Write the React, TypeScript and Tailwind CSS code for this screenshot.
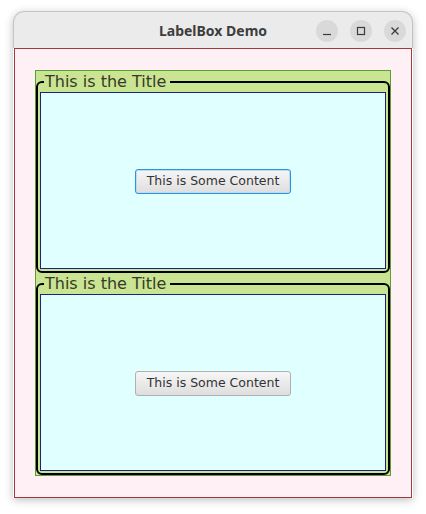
import React from "react";

function LabelBox({ focused }: { focused?: boolean }) {
  return (
    <fieldset className="m-0 h-[202px] rounded-[6px] border-2 border-black px-[2px] pb-[2px] pt-0">
      <legend
        className="ml-[4px] pl-[1px] pr-[4px] text-[16px] leading-[21px] text-[#38382c]"
        style={{ fontFamily: '"DejaVu Sans", sans-serif' }}
      >
        This is the Title
      </legend>
      <div className="flex h-[177px] items-center justify-center border border-[#1f1f86] bg-[#e0ffff]">
        <button
          className={
            "mt-[2px] h-[25px] w-[156px] rounded-[3px] border text-[12.5px] leading-none text-[#333333] " +
            (focused
              ? "border-[#2f92dc] bg-gradient-to-b from-[#f6f6f6] to-[#dedede] shadow-[inset_0_0_0_1px_#bcdcf3]"
              : "border-[#b0b0b0] bg-gradient-to-b from-[#f6f6f6] to-[#dedede]")
          }
          style={{ fontFamily: '"DejaVu Sans", sans-serif' }}
        >
          This is Some Content
        </button>
      </div>
    </fieldset>
  );
}

export default function App() {
  return (
    <div className="h-[514px] w-[426px] bg-white pl-[13px] pt-[11px]">
      <div className="w-[400px] rounded-t-[11px] shadow-[0_2px_8px_rgba(0,0,0,0.25)]">
        <div className="relative flex h-[37px] items-center justify-center rounded-t-[11px] border border-b-0 border-[#c4c4c4] bg-[#ebebeb]">
          <span
            className="text-[14px] font-bold text-[#3d3d3d]"
            style={{ fontFamily: '"Noto Sans", "Open Sans", sans-serif' }}
          >
            LabelBox Demo
          </span>
          <div className="absolute right-[6px] top-[8px] flex gap-[12px]">
            <div className="flex h-[22px] w-[22px] items-center justify-center rounded-full bg-[#d9d9d9]">
              <svg width="10" height="10" viewBox="0 0 10 10">
                <line x1="1" y1="8.5" x2="9" y2="8.5" stroke="#3a3a3a" strokeWidth="1.2" />
              </svg>
            </div>
            <div className="flex h-[22px] w-[22px] items-center justify-center rounded-full bg-[#d9d9d9]">
              <svg width="10" height="10" viewBox="0 0 10 10">
                <rect x="1.5" y="1.5" width="7" height="7" fill="none" stroke="#3a3a3a" strokeWidth="1.2" />
              </svg>
            </div>
            <div className="flex h-[22px] w-[22px] items-center justify-center rounded-full bg-[#d9d9d9]">
              <svg width="10" height="10" viewBox="0 0 10 10">
                <path d="M1.5 1.5 L8.5 8.5 M8.5 1.5 L1.5 8.5" stroke="#3a3a3a" strokeWidth="1.3" />
              </svg>
            </div>
          </div>
        </div>
        <div className="mx-px h-[450px] border border-[#9e3b3b] bg-[#fff0f5] px-[20px] pt-[21px]">
          <div className="h-[406px] w-[356px] border border-[#5a9e3a] bg-[#c9e591]">
            <LabelBox focused />
            <LabelBox />
          </div>
        </div>
      </div>
    </div>
  );
}
